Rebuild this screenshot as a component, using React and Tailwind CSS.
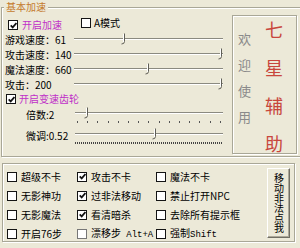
const CJK = "font-['Noto_Sans_CJK_SC','Noto_Sans',sans-serif]";

function Box({ checked, dim }) {
  return (
    <span
      className={`flex h-[10px] w-[10px] shrink-0 items-center justify-center border-[1.5px] bg-white ${
        dim ? "border-[#777]" : "border-[#141414]"
      }`}
    >
      {checked && (
        <svg width="7" height="7" viewBox="0 0 7 7">
          <path d="M0.7 3.3 L2.7 5.4 L6.4 1.1" fill="none" stroke="#111" strokeWidth="1.7" />
        </svg>
      )}
    </span>
  );
}

function Thumb({ className }) {
  return (
    <svg className={`absolute ${className}`} width="6" height="12" viewBox="0 0 6 12">
      <path d="M2.5 1 V9" stroke="#fff" strokeWidth="1" />
      <path d="M3.5 0.5 V8.5 Q3.5 11 0.5 11" fill="none" stroke="#5f5e56" strokeWidth="1" />
    </svg>
  );
}

function Track() {
  return <div className="h-[2px] border-b border-t border-b-white border-t-[#8b8a80]" />;
}

function SpeedRow({ label, thumb }) {
  return (
    <div className="flex h-[15px] items-center">
      <span className="w-[72px] whitespace-nowrap pl-[3px] leading-[12px]">{label}</span>
      <div className="relative w-[149px] self-stretch pt-[6px]">
        <Track />
        <Thumb className={thumb} />
      </div>
    </div>
  );
}

function Item({ checked, dim, children }) {
  return (
    <div className="flex h-[19px] items-center">
      <Box checked={checked} dim={dim} />
      <span className="ml-[4px] whitespace-nowrap leading-[12px]">{children}</span>
    </div>
  );
}

export default function App() {
  return (
    <div className={`h-[248px] w-[300px] overflow-hidden bg-[#ece9d8] text-[10px] text-black ${CJK}`}>
      <fieldset className="ml-[1px] h-[157px] w-[330px] border border-[#a9a797] shadow-[inset_1px_1px_0_#fff,1px_1px_0_#fff]">
        <legend className="ml-[2px] bg-[#ece9d8] px-[2px] leading-[14px] text-[#c47a2c]">基本加速</legend>
        <div className="flex">
          <div className="w-[230px] shrink-0">
            <div className="mt-[4px] flex h-[14px] items-center pl-[6px]">
              <div className="flex w-[73px] items-center">
                <Box checked />
                <span className="ml-[4px] leading-[12px] text-[#c030c8]">开启加速</span>
              </div>
              <div className="mb-[4px] flex items-center">
                <Box />
                <span className="ml-[3px] leading-[12px]">A模式</span>
              </div>
            </div>

            <SpeedRow label="游戏速度：61" thumb="left-[47px] top-[1px]" />
            <SpeedRow label="攻击速度：140" thumb="left-[144px] top-[1px]" />
            <SpeedRow label="魔法速度：660" thumb="left-[71px] top-[1px]" />
            <SpeedRow label="攻击：200" thumb="left-[144px] top-[1px]" />

            <div className="flex h-[14px] items-center pl-[4px]">
              <Box checked />
              <span className="ml-[3px] leading-[12px] text-[#c030c8]">开启变速齿轮</span>
            </div>

            <div className="flex h-[21px]">
              <span className="w-[73px] pl-[24px] pt-[3px] leading-[12px]">倍数:2</span>
              <div className="relative w-[148px] pt-[6px]">
                <Track />
                <div className="mt-[7px] flex justify-between px-[2px]">
                  {Array.from({ length: 15 }).map((_, i) => (
                    <span key={i} className="h-[2px] w-[1px] bg-[#555]" />
                  ))}
                </div>
                <Thumb className="left-[9px] top-[1px]" />
              </div>
            </div>

            <div className="flex h-[22px]">
              <span className="w-[73px] pl-[24px] pt-[3px] leading-[12px]">微调:0.52</span>
              <div className="relative w-[148px] pt-[6px]">
                <Track />
                <div className="mt-[7px] h-[2px] bg-[repeating-linear-gradient(90deg,#444_0_1px,transparent_1px_2px)]" />
                <Thumb className="left-[77px] top-[1px]" />
              </div>
            </div>
          </div>

          <div className="mt-[1px] grid h-[139px] w-[65px] shrink-0 grid-cols-[13px_18px] gap-x-[14px] border border-[#a9a797] pl-[5px] shadow-[inset_1px_1px_0_#fff,1px_1px_0_#fff]">
            <div className="flex flex-col gap-[13px] pt-[16px] text-[13px] leading-[13px] text-[#8a8a8a]">
              <span>欢</span>
              <span>迎</span>
              <span>使</span>
              <span>用</span>
            </div>
            <div className="flex flex-col gap-[20px] pt-[4px] text-[18px] leading-[18px] text-[#c8463c]">
              <span>七</span>
              <span>星</span>
              <span>辅</span>
              <span>助</span>
            </div>
          </div>
        </div>
      </fieldset>

      <div className="ml-[2px] mt-[6px] flex h-[79px] w-[293px] border border-[#a9a797] pt-[3px] shadow-[inset_1px_1px_0_#fff,1px_1px_0_#fff]">
        <div className="w-[74px] shrink-0 pl-[4px]">
          <Item>超级不卡</Item>
          <Item>无影神功</Item>
          <Item>无影魔法</Item>
          <Item>开启76步</Item>
        </div>
        <div className="w-[79px] shrink-0">
          <Item checked>攻击不卡</Item>
          <Item checked>过非法移动</Item>
          <Item checked>看清暗杀</Item>
          <Item dim>
            漂移步 <span className="ml-[3px] font-['Liberation_Mono',monospace] text-[9px]">Alt+A</span>
          </Item>
        </div>
        <div className="w-[111px] shrink-0">
          <Item>魔法不卡</Item>
          <Item>禁止打开NPC</Item>
          <Item>去除所有提示框</Item>
          <Item>
            强制<span className="font-['Liberation_Mono',monospace] text-[9px]">Shift</span>
          </Item>
        </div>
        <button className="mt-[1px] flex h-[70px] w-[23px] shrink-0 items-center justify-center border border-b-[#716f64] border-l-white border-r-[#716f64] border-t-white text-[10px] leading-[12px] shadow-[inset_-1px_-1px_0_#aca899]">
          <span className="[writing-mode:vertical-rl]">移动非法点我</span>
        </button>
      </div>
    </div>
  );
}
